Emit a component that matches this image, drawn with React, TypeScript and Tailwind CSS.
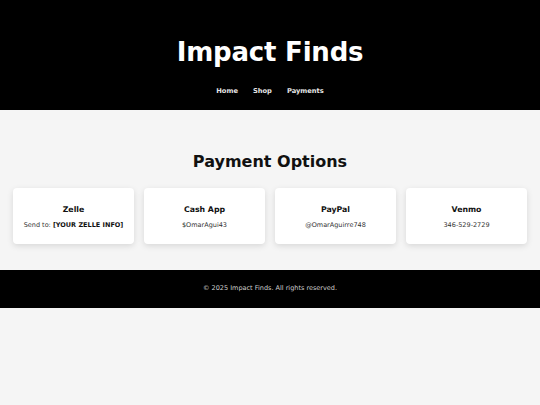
import React from "react";

const cards = [
  { title: "Zelle", body: <>Send to: <b className="font-bold text-[#111]">[YOUR ZELLE INFO]</b></> },
  { title: "Cash App", body: <>$OmarAgui43</> },
  { title: "PayPal", body: <>@OmarAguirre748</> },
  { title: "Venmo", body: <>346-529-2729</> },
];

export default function App() {
  return (
    <div className="min-h-[405px] bg-[#f5f5f5]" style={{ fontFamily: '"DejaVu Sans", sans-serif' }}>
      <header className="bg-black h-[110px] flex flex-col items-center">
        <h1 className="text-white font-bold text-[26px] leading-none mt-[39px] tracking-[-0.2px]">Impact Finds</h1>
        <nav className="flex gap-[15px] mt-[21px] text-[6.7px] font-bold text-[#e5e5e5]">
          <span>Home</span>
          <span>Shop</span>
          <span>Payments</span>
        </nav>
      </header>
      <main className="h-[160px] flex flex-col items-center">
        <h2 className="text-[16px] font-bold text-[#111] mt-[44px] leading-none">Payment Options</h2>
        <div className="flex gap-[10px] mt-[18px] px-[13px] w-full">
          {cards.map((c) => (
            <div key={c.title} className="flex-1 h-[56px] bg-white rounded-[4px] shadow-[0_2px_6px_rgba(0,0,0,0.12)] flex flex-col items-center">
              <div className="text-[7.8px] font-bold text-[#111] mt-[18px] leading-none">{c.title}</div>
              <div className="text-[6.5px] text-[#333] mt-[8px] leading-none">{c.body}</div>
            </div>
          ))}
        </div>
      </main>
      <footer className="bg-black h-[38px] flex items-center justify-center">
        <span className="text-[6.5px] text-[#cfcfcf]">© 2025 Impact Finds. All rights reserved.</span>
      </footer>
    </div>
  );
}
